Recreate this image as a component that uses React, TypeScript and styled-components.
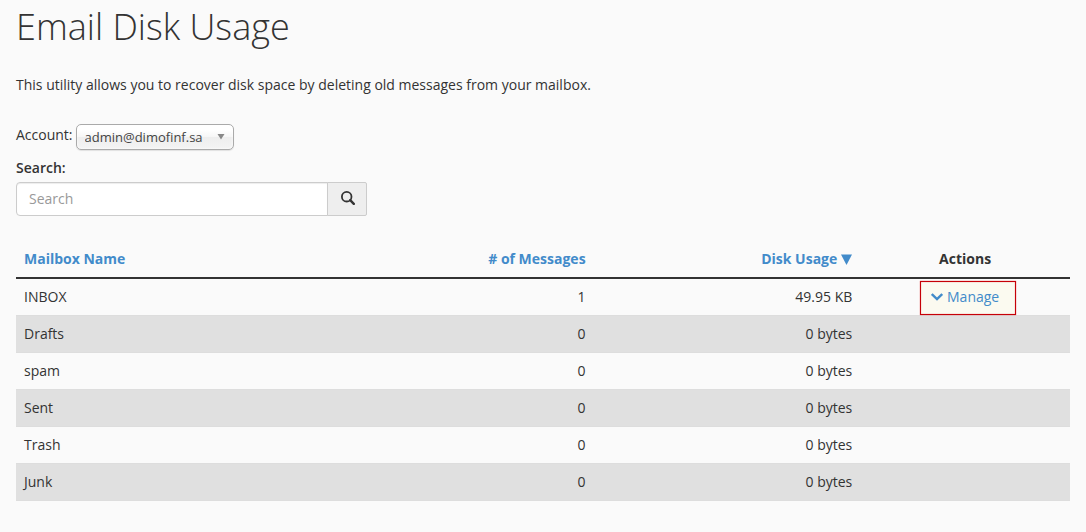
import React from "react";
import styled, { createGlobalStyle } from "styled-components";

const GlobalStyle = createGlobalStyle`
  *, *::before, *::after { box-sizing: border-box; }
  body {
    margin: 0;
    background: #fafafa;
    color: #333;
    font: 14px/20px "Open Sans", sans-serif;
  }
`;

const Page = styled.main`
  padding: 7px 16px 16px;
`;

const Title = styled.h1`
  margin: 0 0 28px;
  font-size: 36px;
  font-weight: 300;
  line-height: 40px;
`;

const Intro = styled.p`
  margin: 0 0 29px;
`;

const AccountRow = styled.div`
  display: flex;
  align-items: flex-start;
  gap: 3px;
  margin-bottom: 8px;
`;

const AccountLabel = styled.label`
  padding-top: 1px;
`;

const SelectBox = styled.span`
  position: relative;
  display: inline-flex;
`;

const Select = styled.select`
  appearance: none;
  width: 158px;
  height: 26px;
  margin: 0;
  padding: 0 24px 0 8px;
  border: 1px solid #aaa;
  border-radius: 5px;
  background: linear-gradient(#fff 20%, #f6f6f6 50%, #eee 52%, #f4f4f4 100%);
  box-shadow: inset 0 0 3px #fff, 0 1px 1px rgba(0, 0, 0, 0.1);
  color: #444;
  font: 13px/24px "Open Sans", sans-serif;
`;

const SelectArrow = styled.svg`
  position: absolute;
  top: 10px;
  right: 9px;
  pointer-events: none;
`;

const SearchLabel = styled.label`
  display: block;
  margin-bottom: 4px;
  font-weight: 600;
`;

const SearchGroup = styled.form`
  display: flex;
  width: 100%;
  max-width: 351px;
  margin-bottom: 25px;
`;

const SearchInput = styled.input`
  flex: 1;
  min-width: 0;
  height: 34px;
  padding: 5px 12px 7px;
  border: 1px solid #ccc;
  border-radius: 4px 0 0 4px;
  background: #fff;
  box-shadow: inset 0 1px 1px rgba(0, 0, 0, 0.075);
  color: #333;
  font: inherit;
  &::placeholder { color: #999; }
`;

const SearchButton = styled.button`
  display: flex;
  align-items: center;
  justify-content: center;
  width: 40px;
  height: 34px;
  margin-left: -1px;
  padding: 0 0 2px 1px;
  border: 1px solid #ccc;
  border-radius: 0 2px 2px 0;
  background: #eee;
  color: #333;
`;

const Table = styled.table`
  width: 100%;
  table-layout: fixed;
  border-collapse: separate;
  border-spacing: 0;
`;

type Align = "left" | "right" | "center";

const HeadCell = styled.th<{ $align: Align; $width?: string }>`
  width: ${(p) => p.$width ?? "auto"};
  padding: 8px;
  border-bottom: 2px solid #333;
  font-weight: 700;
  text-align: ${(p) => p.$align};
`;

const Cell = styled.td<{ $align?: Align }>`
  height: 36px;
  padding: 8px;
  vertical-align: top;
  text-align: ${(p) => p.$align ?? "left"};
`;

const Row = styled.tr`
  &:nth-child(even) { background: #e0e0e0; }
  & + & > td { height: 37px; border-top: 1px solid #ddd; }
  &:last-child > td { height: 38px; border-bottom: 1px solid #ddd; }
`;

const SortLink = styled.a`
  color: #428bca;
  text-decoration: none;
`;

const SortArrow = styled.svg`
  margin-left: 4px;
  vertical-align: -1px;
`;

const ManageLink = styled.a`
  position: relative;
  z-index: 0;
  display: inline-flex;
  align-items: center;
  gap: 4px;
  color: #428bca;
  text-decoration: none;
  vertical-align: top;
`;

const Highlight = styled.span`
  position: absolute;
  z-index: -1;
  inset: -6px -17px -8px -11px;
  border: 1px solid #c60008;
  background: #fbfaf0;
  box-shadow: 0 0 1px #e04040, inset 0 0 1px #e04040;
  pointer-events: none;
`;

const mailboxes = [
  { name: "INBOX", messages: 1, usage: "49.95 KB" },
  { name: "Drafts", messages: 0, usage: "0 bytes" },
  { name: "spam", messages: 0, usage: "0 bytes" },
  { name: "Sent", messages: 0, usage: "0 bytes" },
  { name: "Trash", messages: 0, usage: "0 bytes" },
  { name: "Junk", messages: 0, usage: "0 bytes" },
];

export default function App() {
  return (
    <Page>
      <GlobalStyle />
      <Title>Email Disk Usage</Title>
      <Intro>
        This utility allows you to recover disk space by deleting old messages from your mailbox.
      </Intro>
      <AccountRow>
        <AccountLabel htmlFor="account">Account:</AccountLabel>
        <SelectBox>
          <Select id="account">
            <option>admin@dimofinf.sa</option>
          </Select>
          <SelectArrow width="8" height="6" viewBox="0 0 8 6" aria-hidden="true">
            <path d="M0.5 0H7.5L4 5.6Z" fill="#888" />
          </SelectArrow>
        </SelectBox>
      </AccountRow>
      <SearchLabel htmlFor="search">Search:</SearchLabel>
      <SearchGroup onSubmit={(e) => e.preventDefault()}>
        <SearchInput id="search" type="text" placeholder="Search" />
        <SearchButton type="submit" aria-label="Search">
          <svg width="14" height="14" viewBox="0 0 14 14" fill="none" stroke="currentColor" aria-hidden="true">
            <circle cx="5.7" cy="5.7" r="4.8" strokeWidth="1.8" />
            <path d="M9.2 9.2L12.8 12.8" strokeWidth="2.4" strokeLinecap="round" />
          </svg>
        </SearchButton>
      </SearchGroup>
      <Table>
        <thead>
          <tr>
            <HeadCell $align="left"><SortLink href="#name">Mailbox Name</SortLink></HeadCell>
            <HeadCell $align="right" $width="25%"><SortLink href="#messages"># of Messages</SortLink></HeadCell>
            <HeadCell $align="right" $width="25.3%">
              <SortLink href="#usage">
                Disk Usage
                <SortArrow width="11" height="11" viewBox="0 0 11 11" aria-hidden="true">
                  <path d="M0 0.5H11L5.5 11Z" fill="currentColor" />
                </SortArrow>
              </SortLink>
            </HeadCell>
            <HeadCell $align="center" $width="19.9%">Actions</HeadCell>
          </tr>
        </thead>
        <tbody>
          {mailboxes.map((box) => (
            <Row key={box.name}>
              <Cell>{box.name}</Cell>
              <Cell $align="right">{box.messages}</Cell>
              <Cell $align="right">{box.usage}</Cell>
              <Cell $align="center">
                {box.messages > 0 && (
                  <ManageLink href="#manage">
                    <svg width="12" height="8" viewBox="0 0 12 8" fill="none" stroke="currentColor" strokeWidth="2.4" aria-hidden="true">
                      <path d="M0.8 1L6 6.1L11.2 1" />
                    </svg>
                    Manage
                    <Highlight />
                  </ManageLink>
                )}
              </Cell>
            </Row>
          ))}
        </tbody>
      </Table>
    </Page>
  );
}
